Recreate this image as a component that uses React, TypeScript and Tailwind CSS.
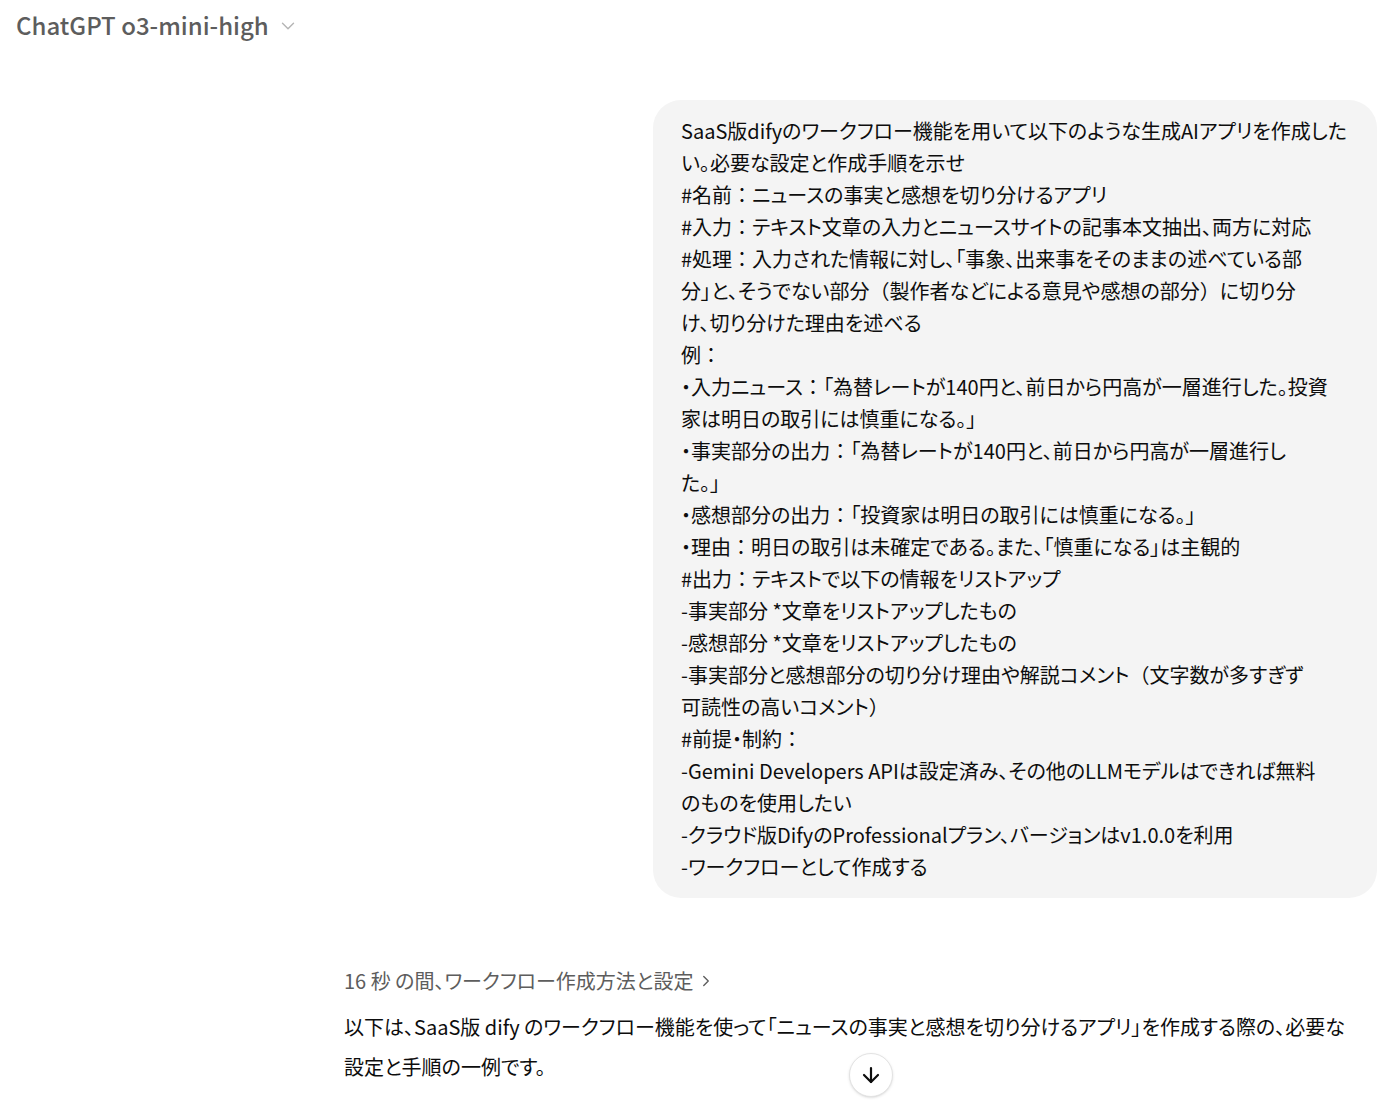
import { ArrowDown, ChevronDown, ChevronRight } from 'lucide-react';

const promptLines = [
  "SaaS版difyのワークフロー機能を用いて以下のような生成AIアプリを作成した",
  "い。必要な設定と作成手順を示せ",
  "#名前：ニュースの事実と感想を切り分けるアプリ",
  "#入力：テキスト文章の入力とニュースサイトの記事本文抽出、両方に対応",
  "#処理：入力された情報に対し、「事象、出来事をそのままの述べている部",
  "分」と、そうでない部分（製作者などによる意見や感想の部分）に切り分",
  "け、切り分けた理由を述べる",
  "例：",
  "・入力ニュース：「為替レートが140円と、前日から円高が一層進行した。投資",
  "家は明日の取引には慎重になる。」",
  "・事実部分の出力：「為替レートが140円と、前日から円高が一層進行し",
  "た。」",
  "・感想部分の出力：「投資家は明日の取引には慎重になる。」",
  "・理由：明日の取引は未確定である。また、「慎重になる」は主観的",
  "#出力：テキストで以下の情報をリストアップ",
  "-事実部分 *文章をリストアップしたもの",
  "-感想部分 *文章をリストアップしたもの",
  "-事実部分と感想部分の切り分け理由や解説コメント（文字数が多すぎず",
  "可読性の高いコメント）",
  "#前提・制約：",
  "-Gemini Developers APIは設定済み、その他のLLMモデルはできれば無料",
  "のものを使用したい",
  "-クラウド版DifyのProfessionalプラン、バージョンはv1.0.0を利用",
  "-ワークフローとして作成する",
];

// full-width colon and parens keep their full width, as in the original font
function Line({ text }: { text: string }) {
  const parts = text.split(/([：（）])/);
  return (
    <div className="text-[20px] leading-[32px] whitespace-nowrap">
      {parts.map((p, i) =>
        p === "：" || p === "（" || p === "）" ? (
          <span key={i} className="[font-feature-settings:normal]">{p}</span>
        ) : (
          p
        )
      )}
    </div>
  );
}

export default function App() {
  return (
    <div className="relative w-[1400px] h-[1117px] overflow-hidden bg-white font-['Noto_Sans_CJK_JP','Noto_Sans',sans-serif] text-[#0d0d0d] [font-feature-settings:'palt']">
      {/* header */}
      <div className="h-[50px] px-4 flex items-center gap-2">
        <span className="text-[24px] font-medium text-[#5d5d5d]">ChatGPT o3-mini-high</span>
        <ChevronDown size={22} strokeWidth={1.5} className="text-[#b4b4b4] mt-0.5" />
      </div>

      <div className="pl-[344px] pr-[23px] flex flex-col">
        {/* user message */}
        <div className="self-end w-[724px] mt-[50px] rounded-[28px] bg-[#f4f4f4] px-7 py-[15px]">
          {promptLines.map((line, i) => (
            <Line key={i} text={line} />
          ))}
        </div>

        {/* thinking */}
        <div className="mt-[67px] flex items-center gap-1 text-[20px] leading-[32px] text-[#5d5d5d]">
          <span>16 秒 の間、ワークフロー作成方法と設定</span>
          <ChevronRight size={18} strokeWidth={1.8} />
        </div>

        {/* answer */}
        <p className="mt-[10px] text-[20px] leading-[40px]">
          以下は、SaaS版 dify のワークフロー機能を使って「ニュースの事実と感想を切り分けるアプリ」を作成する際の、必要な
          <br />
          設定と手順の一例です。
        </p>
      </div>

      {/* scroll to bottom */}
      <button className="absolute left-[849px] top-[1053px] w-11 h-11 rounded-full border border-[#e3e3e3] bg-white flex items-center justify-center shadow-sm">
        <ArrowDown size={24} strokeWidth={2.2} className="text-[#0d0d0d]" />
      </button>
    </div>
  );
}
